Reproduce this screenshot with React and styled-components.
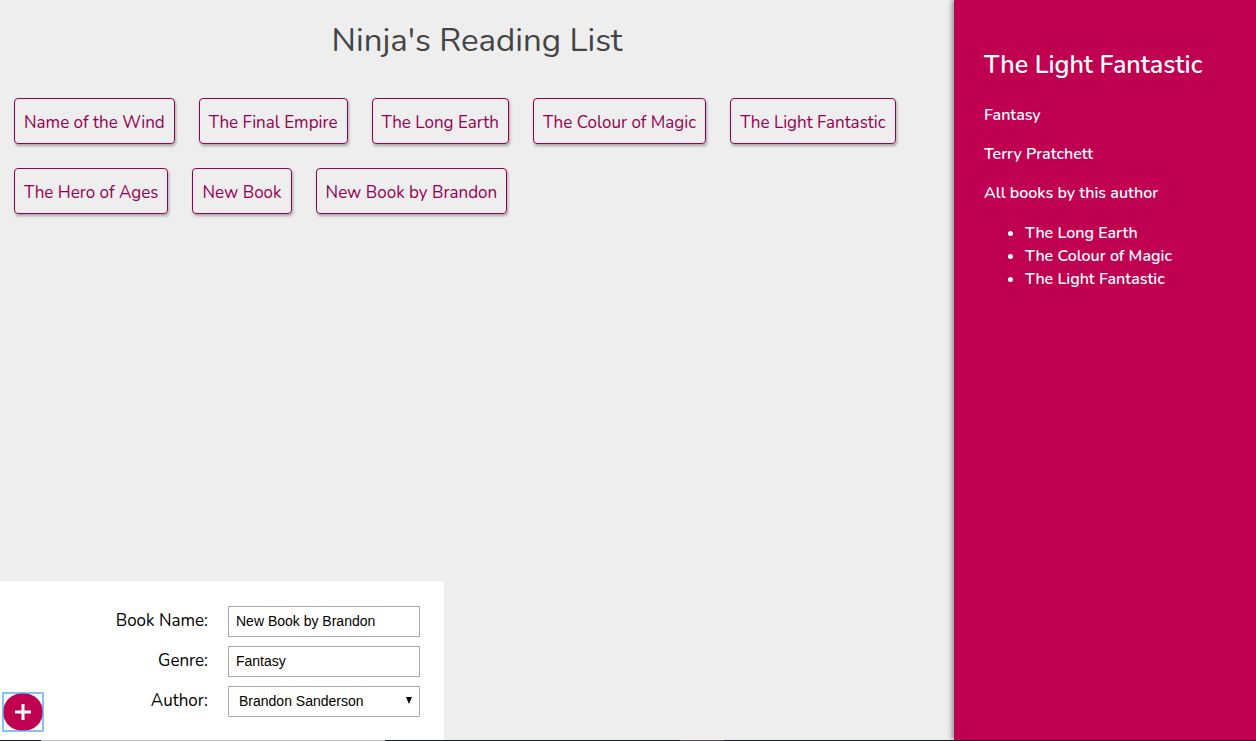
import React, { useState } from "react";
import styled, { createGlobalStyle } from "styled-components";

const GlobalStyle = createGlobalStyle`
  * { box-sizing: border-box; }
  body {
    margin: 0;
    background: #eee;
    font-family: Nunito, "Open Sans", "Noto Sans", sans-serif;
    font-size: 17px;
    line-height: 23px;
    color: #000;
  }
`;

const Page = styled.div`
  display: flex;
  flex-direction: column;
  min-height: 100vh;
`;

const Columns = styled.div`
  flex: 1;
  display: grid;
  grid-template-columns: minmax(0, 1fr) 302px;
`;

const Main = styled.main`
  display: flex;
  flex-direction: column;
  align-items: flex-start;
`;

const Title = styled.h1`
  align-self: stretch;
  margin: 17px 0 33px;
  text-align: center;
  font-size: 33px;
  line-height: 48px;
  font-weight: 400;
  color: #444;
`;

const BookList = styled.ul`
  list-style: none;
  display: flex;
  flex-wrap: wrap;
  gap: 24px;
  margin: 0;
  padding: 0 14px;
`;

const BookButton = styled.button`
  height: 46px;
  padding: 2px 9px 0;
  border: 1px solid #960050;
  border-radius: 4px;
  background: transparent;
  box-shadow: 1px 2px 3px rgba(0, 0, 0, 0.3);
  color: #960050;
  font: inherit;
  cursor: pointer;
`;

const AddForm = styled.form`
  position: relative;
  display: grid;
  grid-template-columns: 208px 192px;
  column-gap: 20px;
  row-gap: 9px;
  margin-top: auto;
  padding: 25px 24px 23px 0;
  background: #fff;
`;

const Label = styled.label`
  padding-top: 3px;
  text-align: right;
`;

const fieldFont = `
  width: 100%;
  height: 31px;
  border: 1px solid #a9a9a9;
  background: #fff;
  color: #000;
  font-family: "Liberation Sans", Arial, sans-serif;
  font-size: 14px;
`;

const TextField = styled.input`
  ${fieldFont}
  padding: 0 7px 2px;
  border-radius: 0;
`;

const SelectBox = styled.div`
  position: relative;
`;

const Select = styled.select`
  ${fieldFont}
  padding: 0 24px 2px 10px;
  border-radius: 1px;
  appearance: none;
`;

const Arrow = styled.svg`
  position: absolute;
  top: 11px;
  right: 8px;
  pointer-events: none;
`;

const AddButton = styled.button`
  position: absolute;
  left: 3px;
  bottom: 9px;
  display: flex;
  align-items: center;
  justify-content: center;
  width: 40px;
  height: 38px;
  padding: 0;
  border: 0;
  border-radius: 50%;
  background: #c00050;
  cursor: pointer;

  &::before {
    content: "";
    position: absolute;
    inset: -1px;
    border: 2px solid rgba(77, 169, 250, 0.7);
    border-radius: 1px;
  }
`;

const Details = styled.aside`
  padding: 47px 30px 30px;
  background: #c00050;
  box-shadow: -2px 0 5px rgba(0, 0, 0, 0.4);
  color: #fff;
  font-size: 16px;
  font-weight: 600;

  p {
    margin: 0 0 16px;
  }
  ul {
    margin: 0;
    padding: 1px 0 0 41px;
  }
`;

const DetailsTitle = styled.h2`
  margin: 0 0 20px;
  font-size: 25px;
  line-height: 37px;
  font-weight: 600;
`;

const BottomEdge = styled.div`
  height: 1px;
  background: linear-gradient(
    to right,
    #1c1c28 41px,
    #c0c0c0 41px 385px,
    #1c1c24 385px 680px,
    #55505a 680px 724px,
    #1c1c28 724px
  );
`;

const books = [
  "Name of the Wind",
  "The Final Empire",
  "The Long Earth",
  "The Colour of Magic",
  "The Light Fantastic",
  "The Hero of Ages",
  "New Book",
  "New Book by Brandon",
];

const authorBooks = ["The Long Earth", "The Colour of Magic", "The Light Fantastic"];

export default function App() {
  const [name, setName] = useState("New Book by Brandon");
  const [genre, setGenre] = useState("Fantasy");

  return (
    <Page>
      <GlobalStyle />
      <Columns>
        <Main>
          <Title>Ninja's Reading List</Title>
          <BookList>
            {books.map((book) => (
              <li key={book}>
                <BookButton type="button">{book}</BookButton>
              </li>
            ))}
          </BookList>
          <AddForm onSubmit={(e) => e.preventDefault()}>
            <Label htmlFor="name">Book Name:</Label>
            <TextField id="name" value={name} onChange={(e) => setName(e.target.value)} />
            <Label htmlFor="genre">Genre:</Label>
            <TextField id="genre" value={genre} onChange={(e) => setGenre(e.target.value)} />
            <Label htmlFor="author">Author:</Label>
            <SelectBox>
              <Select id="author" defaultValue="Brandon Sanderson">
                <option>Brandon Sanderson</option>
                <option>Patrick Rothfuss</option>
                <option>Terry Pratchett</option>
              </Select>
              <Arrow width="6" height="7" viewBox="0 0 6 7" aria-hidden="true">
                <path d="M0 0h6L3 7z" fill="#000" />
              </Arrow>
            </SelectBox>
            <AddButton aria-label="Add book">
              <svg width="16" height="16" viewBox="0 0 16 16" aria-hidden="true">
                <path d="M8 0v16M0 8h16" stroke="#fff" strokeWidth="3" />
              </svg>
            </AddButton>
          </AddForm>
        </Main>
        <Details>
          <DetailsTitle>The Light Fantastic</DetailsTitle>
          <p>Fantasy</p>
          <p>Terry Pratchett</p>
          <p>All books by this author</p>
          <ul>
            {authorBooks.map((book) => (
              <li key={book}>{book}</li>
            ))}
          </ul>
        </Details>
      </Columns>
      <BottomEdge />
    </Page>
  );
}
